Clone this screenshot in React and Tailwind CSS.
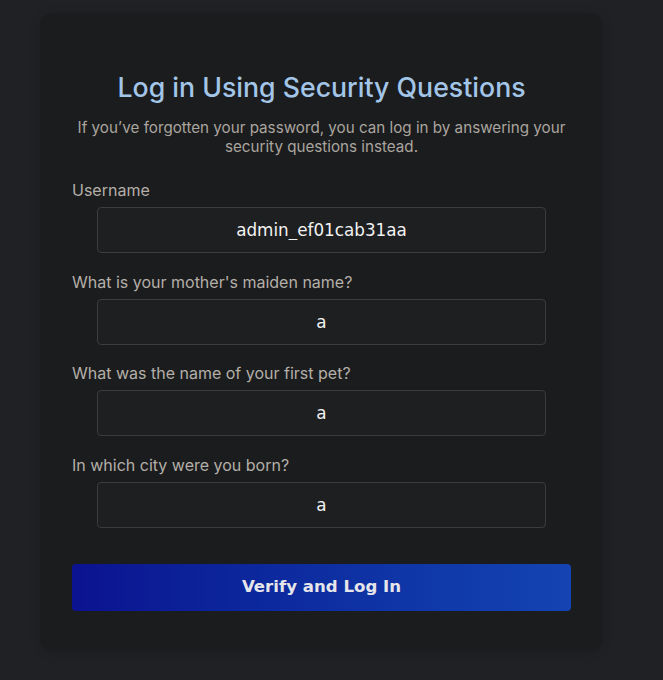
export default function App() {
  const fields = [
    { label: "Username", value: "admin_ef01cab31aa" },
    { label: "What is your mother's maiden name?", value: "a" },
    { label: "What was the name of your first pet?", value: "a" },
    { label: "In which city were you born?", value: "a" },
  ];

  return (
    <div className="min-h-[680px] bg-[#202124] px-10 pt-[13px] font-['Inter',sans-serif]">
      <div className="w-[563px] rounded-[13px] bg-[#1b1c1e] px-8 pt-[57px] pb-[40px] shadow-[0_2px_12px_rgba(0,0,0,0.12)]">
        <h1 className="text-center text-[26.7px] font-medium leading-[34px] text-[#a3c6e8]">
          Log in Using Security Questions
        </h1>
        <p className="mx-auto mt-[14px] text-center text-[15.2px] leading-[19px] text-[#aaa59e]">
          If you’ve forgotten your password, you can log in by answering your security questions instead.
        </p>

        <form className="mt-[22px]" onSubmit={(e) => e.preventDefault()}>
          {fields.map((f) => (
            <div key={f.label} className="mb-[16.5px]">
              <label className="mb-[5px] block text-[16px] leading-[24px] text-[#b4afa8]">{f.label}</label>
              <input
                defaultValue={f.value}
                className="mx-auto block h-[46px] w-[90%] rounded-[4px] border border-[#3b3c3f] bg-[#1e1f21] text-center font-['DejaVu_Sans',sans-serif] text-[16.8px] text-[#f2f2f2] outline-none"
              />
            </div>
          ))}
          <button
            type="submit"
            className="mt-[36px] block h-[47px] w-full rounded-[4px] bg-gradient-to-r from-[#0c1290] to-[#1444b2] font-['DejaVu_Sans',sans-serif] text-[16.6px] font-bold text-[#e6e6ea]"
          >
            Verify and Log In
          </button>
        </form>
      </div>
    </div>
  );
}
